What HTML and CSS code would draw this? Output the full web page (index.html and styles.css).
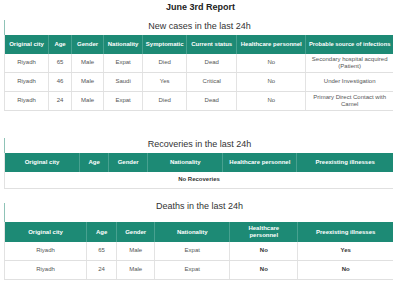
FILE: index.html
```html
<!DOCTYPE html>
<html>
<head>
<meta charset="utf-8">
<link rel="stylesheet" href="styles.css">
</head>
<body>
<div class="title">June 3rd Report</div>

<section class="block block-new">
  <div class="caption">New cases in the last 24h</div>
  <table class="grid">
    <colgroup>
      <col style="width:44px"><col style="width:23px"><col style="width:32px"><col style="width:39px"><col style="width:44px"><col style="width:50px"><col style="width:69px"><col style="width:87px">
    </colgroup>
    <thead>
      <tr><th>Original city</th><th>Age</th><th>Gender</th><th>Nationality</th><th>Symptomatic</th><th>Current status</th><th>Healthcare personnel</th><th class="nowrap">Probable source of infections</th></tr>
    </thead>
    <tbody>
      <tr><td>Riyadh</td><td>65</td><td>Male</td><td>Expat</td><td>Died</td><td>Dead</td><td>No</td><td>Secondary hospital acquired (Patient)</td></tr>
      <tr><td>Riyadh</td><td>46</td><td>Male</td><td>Saudi</td><td>Yes</td><td>Critical</td><td>No</td><td>Under Investigation</td></tr>
      <tr><td>Riyadh</td><td>24</td><td>Male</td><td>Expat</td><td>Died</td><td>Dead</td><td>No</td><td>Primary Direct Contact with Camel</td></tr>
    </tbody>
  </table>
</section>

<section class="block block-rec">
  <div class="caption">Recoveries in the last 24h</div>
  <table class="grid">
    <colgroup>
      <col style="width:75px"><col style="width:29px"><col style="width:39px"><col style="width:75px"><col style="width:74px"><col style="width:96px">
    </colgroup>
    <thead>
      <tr><th>Original city</th><th>Age</th><th>Gender</th><th>Nationality</th><th>Healthcare personnel</th><th>Preexisting illnesses</th></tr>
    </thead>
    <tbody>
      <tr class="empty"><td colspan="6">No Recoveries</td></tr>
    </tbody>
  </table>
</section>

<section class="block block-deaths">
  <div class="caption">Deaths in the last 24h</div>
  <table class="grid grid-deaths">
    <colgroup>
      <col style="width:82px"><col style="width:30px"><col style="width:38px"><col style="width:75px"><col style="width:68px"><col style="width:95px">
    </colgroup>
    <thead>
      <tr><th>Original city</th><th>Age</th><th>Gender</th><th>Nationality</th><th>Healthcare<br>personnel</th><th>Preexisting illnesses</th></tr>
    </thead>
    <tbody>
      <tr><td>Riyadh</td><td>65</td><td>Male</td><td>Expat</td><td class="b">No</td><td class="b">Yes</td></tr>
      <tr><td>Riyadh</td><td>24</td><td>Male</td><td>Expat</td><td class="b">No</td><td class="b">No</td></tr>
    </tbody>
  </table>
</section>
</body>
</html>
```

FILE: styles.css
```css
html, body {
  margin: 0;
  padding: 0;
  background: #ffffff;
}
body {
  font-family: "Liberation Sans", Arial, sans-serif;
  width: 400px;
}
.title {
  height: 14px;
  line-height: 14px;
  text-align: center;
  font-weight: bold;
  font-size: 9px;
  color: #222;
  padding-left: 1px;
}
.block {
  margin-left: 4px;
  width: 389px;
}
.block-new { margin-top: 6px; }
.block-rec { margin-top: 27px; }
.block-deaths { margin-top: 14px; }

.caption {
  height: 15px;
  line-height: 12px;
  border-left: 1px solid #8fc3b7;
  text-align: center;
  font-size: 9px;
  color: #333;
  box-sizing: border-box;
  padding-left: 1px;
}
.block-deaths .caption {
  height: 19px;
  line-height: 6px;
}
.grid {
  width: 389px;
  table-layout: fixed;
  border-collapse: collapse;
  border-left: 1px solid #e2e2e2;
}
.grid th {
  background: #1d8a75;
  color: #fff;
  font-weight: bold;
  font-size: 6px;
  height: 19px;
  padding: 0 2px;
  border-left: 1px solid #48a190;
  text-align: center;
  vertical-align: middle;
  line-height: 7px;
}
.grid th.nowrap {
  white-space: nowrap;
  padding: 0;
  font-size: 5.8px;
}
.grid th:first-child { border-left: none; }
.grid td {
  font-size: 6px;
  color: #555;
  height: 18px;
  padding: 0 3px;
  text-align: center;
  vertical-align: middle;
  line-height: 7.5px;
  border-left: 1px solid #e3e3e3;
  border-bottom: 1px solid #e0e0e0;
}
.grid td:first-child { border-left: none; }
.grid tr.empty td {
  height: 16px;
  font-weight: bold;
  color: #333;
}
.grid-deaths th { height: 20px; }
.grid-deaths td { height: 18px; }
.grid td.b {
  font-weight: bold;
  color: #333;
}
```
